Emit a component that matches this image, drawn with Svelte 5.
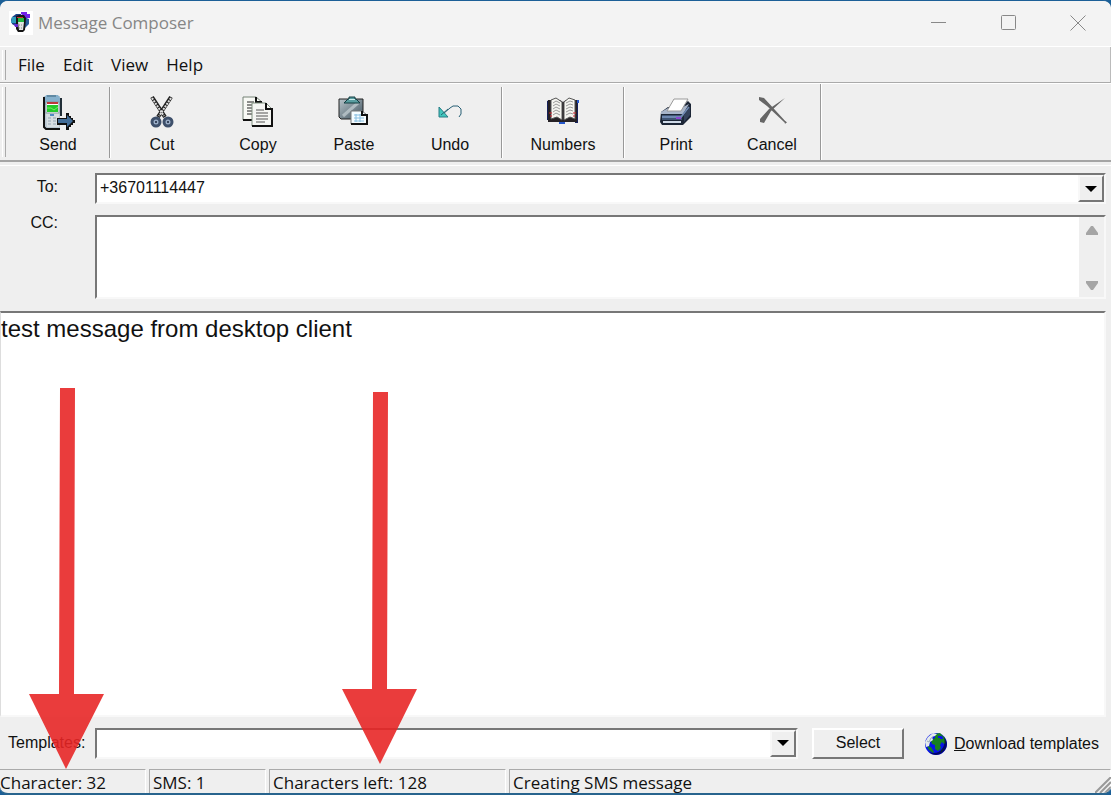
<script>
  let recipient = $state('+36701114447');
  let cc = $state('');
  let message = $state('test message from desktop client');
  let template = $state('');
  const limit = 160;
  let length = $derived(message.length);
  const menus = ['File', 'Edit', 'View', 'Help'];
  const groups = [
    ['Send'],
    ['Cut', 'Copy', 'Paste', 'Undo'],
    ['Numbers'],
    ['Print', 'Cancel'],
  ];
</script>

{#snippet icon(name)}
  <svg class="tool-icon" viewBox="0 0 36 36" aria-hidden="true">
    {#if name === 'Send'}
      <path d="M4 2h16v33H5l-2-2V4z" fill="#b9c7d1" />
      <path d="M4 3v30l2 2h14" fill="none" stroke="#111" stroke-width="2" />
      <path d="M21 4v18" stroke="#222f38" stroke-width="2" />
      <path d="M6 1h12l2 3v7H5V3z" fill="#86b1cd" />
      <path d="M7 2h9" stroke="#3b637b" />
      <path d="M6 19h13v14H7z" fill="#d7dee2" />
      <rect x="6" y="8" width="13" height="11" fill="#fff" stroke="#83979e" />
      <rect x="7" y="8" width="11" height="2" fill="#bd383b" />
      <rect x="7" y="11" width="11" height="7" fill="#24c92c" />
      <path d="M7 14h4l3 2 4-3" fill="none" stroke="#75ef61" />
      <rect x="10" y="20" width="4" height="2" fill="#4f8bc2" />
      <path d="M8 24h3m2 0h3M8 27h3m2 0h3M8 30h3m2 0h3" stroke="#92a3b1" />
      <path d="M17 24h9v-5h3v3h2v2h2v2h2v3h-2v2h-2v2h-2v3h-3v-5h-9z" fill="#111" />
      <path d="M18 25h9v-4l6 6-6 6v-4h-9z" fill="#426d98" />
    {:else if name === 'Cut'}
      <path d="M8 3l13 20M27 3L14 23" stroke="#222" stroke-width="4" />
      <path d="M8 4l12 18M27 4L15 22" stroke="#ddd" stroke-width="2" stroke-dasharray="2 1" />
      <circle cx="12" cy="28" r="4" fill="#9aadc7" stroke="#3e506b" stroke-width="3" />
      <circle cx="24" cy="28" r="4" fill="#9aadc7" stroke="#3e506b" stroke-width="3" />
      <circle cx="12" cy="28" r="1" fill="#17243a" /><circle cx="24" cy="28" r="1" fill="#17243a" />
    {:else if name === 'Copy'}
      <path d="M3 3h13l6 5v18H3z" fill="#f8f9f5" stroke="#758276" />
      <path d="M16 3v5h6M3 26h10" fill="none" stroke="#111" stroke-width="2" />
      <path d="M7 8h7m-7 3h7m-7 3h6m-6 3h6m-6 3h6" stroke="#222" />
      <path d="M12 9h14l6 6v17H12z" fill="#f5f6f3" stroke="#819181" />
      <path d="M26 9v6h6v17H12" fill="none" stroke="#111" stroke-width="2" />
      <path d="M16 16h8m-8 3h12m-12 3h12m-12 3h12m-12 3h9" stroke="#555" />
    {:else if name === 'Paste'}
      <defs><linearGradient id="board" x2="1" y2="1"><stop stop-color="#b8c4ca" /><stop offset="1" stop-color="#40535f" /></linearGradient></defs>
      <path d="M3 5h24v20H5l-2-2V6z" fill="url(#board)" stroke="#222" />
      <path d="M7 22L23 8" stroke="#d2dce0" stroke-width="3" opacity=".6" />
      <path d="M8 9l4-4h1V3h6v2h1l4 4z" fill="#599da0" stroke="#133d40" />
      <path d="M13 5h6v1h-6z" fill="#caedec" />
      <path d="M15 17h11l5 4v9H15z" fill="#f5fcff" stroke="#777" />
      <path d="M26 17v4h5v9H15" fill="none" stroke="#111" stroke-width="2" />
      <path d="M18 21h7m-7 3h10m-10 3h10M20 20v8m4-8v8" stroke="#86bddf" />
    {:else if name === 'Undo'}
      <path d="M11 20l7-6 3-2h5l3 3v5l-2 3" fill="none" stroke="#275f75" />
      <path d="M7 13v10h9z" fill="#43c7bd" stroke="#287d86" />
      <path d="M9 21l7-6" stroke="#276874" />
    {:else if name === 'Numbers'}
      <path d="M2 7l3-1v20H2zM30 7h3v22h-3z" fill="#16215c" />
      <path d="M3 6h12l3 2 3-2h11v22H20l-2 2-3-2H3z" fill="#252125" />
      <path d="M6 6l5-2 6 4v18l-5-3-6 2zM19 8l5-4 6 2v19l-5-2-6 3z" fill="#f5f5f0" stroke="#555" />
      <path d="M8 9l3-2 4 2M8 12l3-2 4 2M8 15l3-2 4 2M8 18l3-2 4 2M8 21l3-2 4 2M21 9l4-2 3 1M21 12l4-2 3 1M21 15l4-2 3 1M21 18l4-2 3 1M21 21l4-2 3 1" fill="none" stroke="#999" />
      <path d="M4 19h3m-2 3h2m21-3h3m-3 3h2" stroke="#d62430" />
      <path d="M14 29h6M33 6v3" stroke="#2456ca" stroke-width="2" />
    {:else if name === 'Print'}
      <path d="M3 18l7-5h13l7-6 3 3v13l-8 8H4l-2-3z" fill="#1c2636" />
      <path d="M3 18l7-4h13l8-4-6 10H3z" fill="#a8b5ca" />
      <path d="M4 21h20v5H4z" fill="#405575" />
      <path d="M4 23h19l8-10" fill="none" stroke="#6e88b0" stroke-width="2" />
      <path d="M5 28h18" stroke="#cfdae8" stroke-width="2" />
      <path d="M18 24h5" stroke="#8d46d3" stroke-width="2" />
      <path d="M9 17L16 5h14l-7 12z" fill="#fff" stroke="#999" />
      <path d="M26 21l6-8v8l-6 7z" fill="#34435c" />
    {:else}
      <path d="M5 3l5 1 23 25-3-1L13 12 5 6z" fill="#666" />
      <path d="M31 4l-14 13-7 12-4-1v-3l9-10z" fill="#666" />
      <path d="M31 28l1 1" stroke="#666" stroke-width="2" />
    {/if}
  </svg>
{/snippet}

<div class="window">
  <header class="titlebar">
    <svg class="app-icon" viewBox="0 0 24 24" aria-hidden="true">
      <rect width="24" height="24" fill="#fff" />
      <path d="M3 6l4-3h5v13H8l-5-3-1-4z" fill="#1c3f86" />
      <path d="M3 6h4v6H2z" fill="#2e9cbd" />
      <path d="M12 3V1h6v2h3v4h-3v5h-3V5z" fill="#7221e8" />
      <path d="M15 6l5 2v5l-5 5z" fill="#265c9c" />
      <path d="M7 5l3-1h5l2 3-1 12-2 2H9l-2-3z" fill="#161616" />
      <path d="M9 11h6l-1 8h-4z" fill="#e0e4e2" />
      <path d="M10 14h1m1 0h1m-3 3h1m1 0h1" stroke="#888" />
      <path d="M9 7h6v4H9z" fill="#20ba42" /><path d="M8 6h6v1H8z" fill="#c33" />
      <path d="M5 13h4v3H6z" fill="#6728cf" />
    </svg>
    <h1>Message Composer</h1>
    <div class="window-controls">
      <button aria-label="Minimize"><svg viewBox="0 0 16 16"><path d="M0 7.5h15" /></svg></button>
      <button aria-label="Maximize"><svg viewBox="0 0 16 16"><rect x=".5" y=".5" width="14" height="14" rx="1" /></svg></button>
      <button aria-label="Close"><svg viewBox="0 0 16 16"><path d="M.5.5l15 15m0-15l-15 15" /></svg></button>
    </div>
  </header>

  <nav class="menubar">
    {#each menus as menu}<button>{menu}</button>{/each}
  </nav>

  <div class="toolbar" role="toolbar" aria-label="Message">
    {#each groups as group}
      <div class="group" class:single={group[0] === 'Numbers'}>
        {#each group as name}
          <button class="tool">{@render icon(name)}<span>{name}</span></button>
        {/each}
      </div>
    {/each}
  </div>

  <section class="addresses">
    <label for="to">To:</label>
    <div class="combo">
      <select id="to" bind:value={recipient}><option>+36701114447</option></select>
      <span class="drop"><svg viewBox="0 0 12 6"><path d="M0 0h12L6 6z" /></svg></span>
    </div>
    <label for="cc">CC:</label>
    <div class="cc">
      <textarea id="cc" bind:value={cc}></textarea>
      <div class="scroll">
        <button aria-label="Scroll up"><svg viewBox="0 0 12 10"><path d="M5 0h2l5 7v2H0V7z" /></svg></button>
        <button aria-label="Scroll down"><svg viewBox="0 0 12 10"><path d="M0 0h12v2L7 9H5L0 2z" /></svg></button>
      </div>
    </div>
  </section>

  <textarea class="message" aria-label="Message text" bind:value={message} spellcheck="false"></textarea>

  <section class="templates">
    <label for="template">Templates:</label>
    <div class="combo">
      <select id="template" bind:value={template}><option value=""></option></select>
      <span class="drop"><svg viewBox="0 0 12 6"><path d="M0 0h12L6 6z" /></svg></span>
    </div>
    <button class="select">Select</button>
    <a href="#templates">
      <svg class="globe" viewBox="0 0 24 24" aria-hidden="true">
        <circle cx="12" cy="12" r="11" fill="#0713e8" />
        <path d="M11 2l5-1 5 5 1 5-2 1-2-2-2 3 1 3-3 3-3-2v-4l-3-1-1-3 2-2 2-1z" fill="#168020" />
        <path d="M3 14l4 1 3 5-1 1-4-3zM17 18l3-2-3 5z" fill="#168020" />
        <path d="M1 10l3-5 5-4 4 1-2 2-3 1 1 3-3 2-1 4-3 1z" fill="#e4ebeb" />
        <path d="M3 9l2 1 2-4 2-1" fill="none" stroke="#9ab" />
        <path d="M14 5h3v1h2" fill="none" stroke="#0713e8" stroke-width="2" />
        <path d="M20 5c4 5 4 11-1 15-4 4-10 4-14 0 5 2 10 1 13-3 3-4 3-8 2-12z" fill="#000034" opacity=".7" />
      </svg>
      <span><u>D</u>ownload templates</span>
    </a>
  </section>

  <footer>
    <span>Character: {length}</span>
    <span>SMS: {Math.ceil(length / limit)}</span>
    <span>Characters left: {limit - length}</span>
    <span>Creating SMS message</span>
    <svg class="grip" viewBox="0 0 16 16" aria-hidden="true"><path d="M0 16L16 0M5 16L16 5M10 16l6-6" /></svg>
  </footer>

  <svg class="arrow first" viewBox="0 0 76 382" aria-hidden="true"><path d="M31 0h15l-1 306h30l-38 75L0 306h30z" /></svg>
  <svg class="arrow second" viewBox="0 0 76 382" aria-hidden="true"><path d="M31 0h15l-1 297h30l-37 75L0 297h30z" /></svg>
</div>

<style>
  :global(body) { margin: 0; background: #1b5f97; }
  * { box-sizing: border-box; }
  button, select, textarea { font: inherit; color: inherit; margin: 0; padding: 0; border: 0; background: none; border-radius: 0; outline: none; }
  .window {
    position: relative; display: flex; flex-direction: column; height: 100vh; overflow: hidden;
    border-top: 1px solid #1b5f97; border-bottom: 2px solid #28648e;
    border-radius: 8px; background: #efefef; color: #111;
    font: 16px/20px "Liberation Sans", Arial, sans-serif;
  }
  .titlebar { display: flex; align-items: center; flex: 0 0 46px; padding: 0 0 2px 9px; background: #f3f3f3; border-bottom: 1px solid #fff; }
  .app-icon { width: 24px; height: 24px; }
  h1 { flex: 1; margin: 0 5px; color: #868686; font: 17px/24px "Open Sans", "Noto Sans", sans-serif; }
  .window-controls { display: flex; }
  .window-controls button { display: grid; place-items: center; width: 70px; height: 43px; }
  .window-controls button:last-child { width: 67px; }
  .window-controls svg { width: 16px; height: 16px; fill: none; stroke: #888; }
  .menubar, footer { font: 17px/24px "Open Sans", "Noto Sans", sans-serif; }
  .menubar { display: flex; align-items: center; flex: 0 0 36px; gap: 18px; padding-left: 10px; border-bottom: 1px solid #aaa; border-right: 1px solid #bbb; }
  .menubar::before, .toolbar::before { content: ""; width: 2px; margin-left: -8px; border-left: 1px solid #fff; border-right: 1px solid #aaa; }
  .menubar::before { height: 30px; margin-right: -6px; }
  .toolbar { display: flex; flex: 0 0 79px; padding: 3px 0 2px 10px; border-top: 1px solid #fff; border-bottom: 2px solid #a5a5a5; }
  .toolbar::before { margin-right: 4px; height: 70px; }
  .group { display: flex; padding: 0 3px 0 4px; border-right: 1px solid #999; box-shadow: 1px 0 #fff; }
  .group:first-of-type { padding-left: 0; }
  .group:last-of-type { margin: -3px 0 -2px; padding: 3px 0 0 4px; }
  .tool { display: flex; flex-direction: column; align-items: center; width: 96px; padding-top: 7px; gap: 5px; }
  .single .tool { width: 114px; }
  .tool-icon { width: 36px; height: 36px; }
  .addresses { display: grid; grid-template-columns: 84px 1fr; gap: 11px; margin-top: 3px; padding: 7px 5px 12px 0; border-top: 1px solid #fff; }
  .addresses label { width: 58px; text-align: right; padding-top: 4px; }
  .addresses .combo + label { padding-top: 0; margin-top: -2px; }
  .combo, .cc, .message { border: 2px solid; border-color: #777 #f8f8f8 #f8f8f8 #777; background: #fff; }
  .combo { position: relative; height: 31px; }
  .combo select { appearance: none; display: block; width: 100%; height: 26px; padding-left: 3px; }
  .drop { position: absolute; top: 0; right: 0; display: grid; place-items: center; width: 26px; height: 27px; background: #efefef; border: 2px solid; border-color: #f8f8f8 #777 #777 #f8f8f8; pointer-events: none; }
  .drop svg { width: 12px; height: 6px; }
  .cc { display: flex; height: 84px; }
  .cc textarea { flex: 1; resize: none; }
  .scroll { display: flex; flex-direction: column; justify-content: space-between; width: 25px; padding: 8px 0 5px; background: #efefef; }
  .scroll button { height: 12px; }
  .scroll svg { display: block; width: 12px; height: 10px; margin: auto; fill: #a5a5a5; }
  .message { flex: 1; min-height: 0; margin-right: 5px; border-left: 1px solid #ddd; resize: none; font: 24px/28px "Liberation Sans", Arial, sans-serif; padding: 2px 0; }
  .templates { display: flex; align-items: center; flex: 0 0 52px; padding: 0 12px 0 8px; }
  .templates label { width: 87px; }
  .templates .combo { flex: 1; }
  .select { width: 92px; height: 31px; margin: 0 20px 0 14px; border: 2px solid; border-color: #fff #777 #777 #fff; }
  a { display: flex; align-items: center; gap: 6px; padding-top: 2px; color: #111; text-decoration: none; white-space: nowrap; }
  .globe { width: 24px; height: 24px; }
  footer { position: relative; display: grid; grid-template: 24px / 146px 117px 237px 1fr; column-gap: 3px; flex: 0 0 24px; }
  footer span { border-top: 1px solid #aaa; border-left: 1px solid #aaa; border-right: 1px solid #fff; padding-left: 3px; line-height: 26px; white-space: nowrap; }
  footer span:first-child { border-left: 0; padding-left: 0; }
  .grip { position: absolute; right: 0; bottom: 0; width: 16px; height: 16px; fill: none; stroke: #999; stroke-width: 2; }
  .arrow { position: absolute; width: 76px; height: 382px; fill: #e82525; opacity: .89; pointer-events: none; }
  .first { left: 29px; top: 387px; }
  .second { left: 342px; top: 391px; }
</style>
